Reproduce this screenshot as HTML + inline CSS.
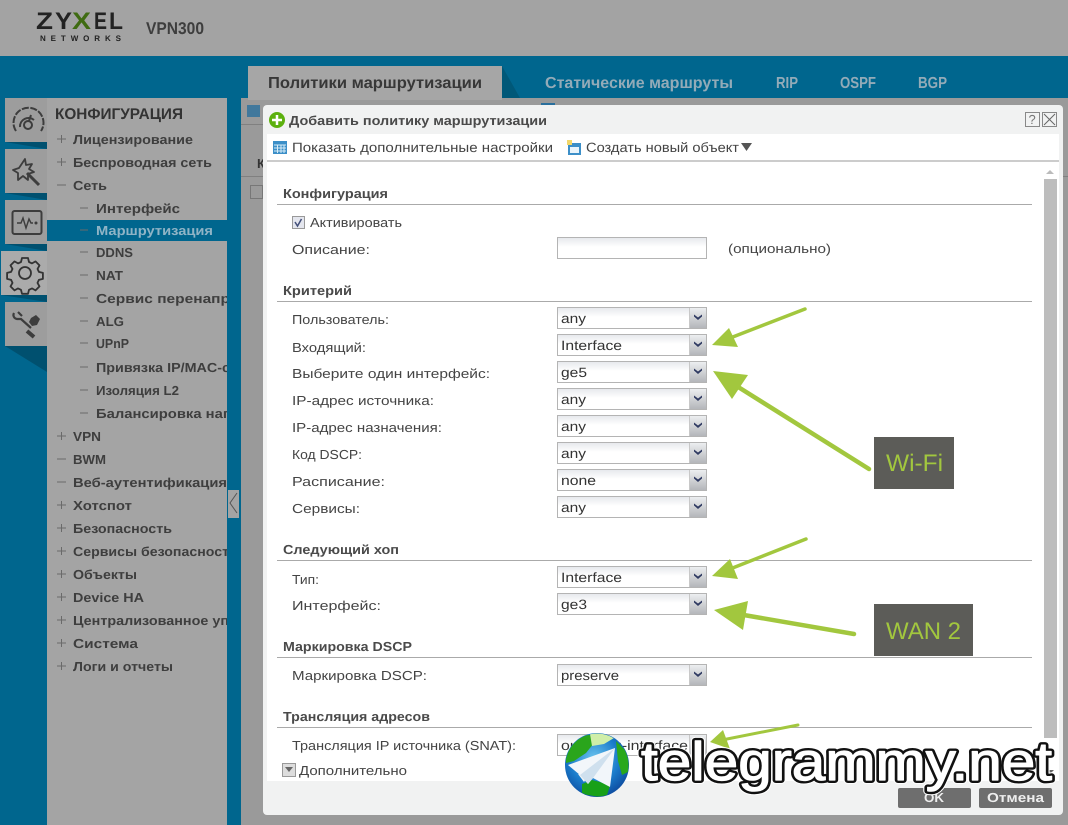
<!DOCTYPE html>
<html><head><meta charset="utf-8"><title>VPN300</title>
<style>
html,body{margin:0;padding:0;background:#00668e;width:1068px;height:825px;overflow:hidden}
svg{display:block}
text{font-family:"Liberation Sans","DejaVu Sans",sans-serif;text-rendering:geometricPrecision}
.m{font-size:13px;font-weight:700;fill:#3e3e3e}
.sel{font-size:13px;font-weight:700}
.l{font-size:13px;fill:#444}
.t{font-size:13px;font-weight:700;fill:#4a4a4a}
.s{font-size:13.5px;fill:#444}
.tab{font-size:16px;font-weight:700;fill:#93abb8}
</style></head><body>
<svg width="1068" height="825" viewBox="0 0 1068 825" xmlns="http://www.w3.org/2000/svg">
<defs>
<linearGradient id="sg" x1="0" y1="0" x2="0" y2="1"><stop offset="0" stop-color="#e6e8ec"/><stop offset=".45" stop-color="#fff"/><stop offset="1" stop-color="#fff"/></linearGradient>
<linearGradient id="bg" x1="0" y1="0" x2="0" y2="1"><stop offset="0" stop-color="#eceef0"/><stop offset="1" stop-color="#b4b6ba"/></linearGradient>
<radialGradient id="gl" cx=".45" cy=".4" r=".7"><stop offset="0" stop-color="#6cc4ee"/><stop offset=".55" stop-color="#1a7ccb"/><stop offset="1" stop-color="#0a3d92"/></radialGradient>
<clipPath id="sb"><rect x="47" y="98" width="180" height="727"/></clipPath>
<clipPath id="gc"><circle cx="597" cy="765" r="31.5"/></clipPath>
<g id="select">
<rect x=".5" y=".5" width="149" height="21" fill="url(#sg)" stroke="#b4b4b4"/>
<rect x="133" y="1" width="16" height="20" fill="url(#bg)"/>
<path d="M132.500 1v20" stroke="#c8c8c8"/>
<path d="M137 7.500l4 3 4-3v2l-4 3.500-4-3.500z" fill="#2f3a62"/>
</g>
</defs>

<rect width="1068" height="825" fill="#00668e"/>
<rect width="1068" height="56" fill="#a3a3a3"/>

<g font-size="24" font-weight="700" fill="#222">
<text x="36" y="29" textLength="17" lengthAdjust="spacingAndGlyphs">Z</text>
<text x="55" y="29" textLength="17" lengthAdjust="spacingAndGlyphs">Y</text>
<text x="72" y="29" textLength="19" lengthAdjust="spacingAndGlyphs" fill="#3f6b12">X</text>
<text x="94" y="29" textLength="13" lengthAdjust="spacingAndGlyphs">E</text>
<text x="109" y="29" textLength="14" lengthAdjust="spacingAndGlyphs">L</text>
</g>
<text x="40" y="41" font-size="8" font-weight="700" fill="#222" textLength="81">NETWORKS</text>
<text x="146" y="34" font-size="17" font-weight="700" fill="#3e3e3e" textLength="58" lengthAdjust="spacingAndGlyphs">VPN300</text>

<!-- tabs -->
<rect x="241" y="98" width="827" height="727" fill="#9a9a9a"/>
<rect x="248" y="66" width="254" height="34" fill="#a6a6a6"/>
<path d="M502 66l18 32h-18z" fill="#005878"/>
<text x="268" y="88" font-size="16" font-weight="700" fill="#383838" textLength="214" lengthAdjust="spacingAndGlyphs">Политики маршрутизации</text>
<text class="tab" x="545" y="88" textLength="188" lengthAdjust="spacingAndGlyphs">Статические маршруты</text>
<text class="tab" x="776" y="88" textLength="22" lengthAdjust="spacingAndGlyphs">RIP</text>
<text class="tab" x="840" y="88" textLength="36" lengthAdjust="spacingAndGlyphs">OSPF</text>
<text class="tab" x="918" y="88" textLength="29" lengthAdjust="spacingAndGlyphs">BGP</text>

<!-- side tiles -->
<path d="M5 346L47 372V346z" fill="#00506f"/>
<path d="M5 142L47 149V142zM5 193L47 200V193zM5 244L47 251V244zM1 295L47 302V295z" fill="#00506f"/>
<rect x="5" y="98" width="42" height="44" fill="#9d9d9d"/>
<rect x="5" y="149" width="42" height="44" fill="#9d9d9d"/>
<rect x="5" y="200" width="42" height="44" fill="#9d9d9d"/>
<rect x="1" y="251" width="46" height="44" fill="#ababab"/>
<rect x="5" y="302" width="42" height="44" fill="#9d9d9d"/>
<!-- gauge -->
<g fill="none" stroke="#3d3d3d" stroke-width="2">
<path d="M16 131a15 15 0 1 1 25 0" stroke-dasharray="7 1.500"/>
<circle cx="28" cy="125" r="4"/><path d="M20 127a8.500 8.500 0 0 1 14-7M29 121l2-6"/>
</g>
<!-- wand -->
<g fill="none" stroke="#3d3d3d" stroke-width="1.800">
<path d="M25 159l1 6 6-1-3 5 5 3-6 2 0 6-5-4-5 4 0-7-5-3 6-2z" stroke-linejoin="round"/>
<path d="M27 173l12 12" stroke-width="3"/>
</g>
<!-- monitor -->
<rect x="12.500" y="211" width="29" height="23" rx="2" fill="none" stroke="#3d3d3d" stroke-width="2"/>
<path d="M17 223h4l2-5 3 10 3-9 2 4h2" fill="none" stroke="#3d3d3d" stroke-width="1.400"/><circle cx="36" cy="223" r="1.500" fill="#3d3d3d"/>
<!-- gear -->
<g fill="none" stroke="#333" stroke-width="1.800" stroke-linejoin="round">
<path d="M22 258h6l1 4 3 1.400 3.500-2 4 4-2 3.500 1.400 3 4 1v6l-4 1-1.400 3 2 3.500-4 4-3.500-2-3 1.400-1 4h-6l-1-4-3-1.400-3.500 2-4-4 2-3.500-1.400-3-4-1v-6l4-1 1.400-3-2-3.500 4-4 3.500 2 3-1.400z"/>
<circle cx="25" cy="273" r="6"/>
</g>
<!-- tools -->
<g fill="none" stroke="#3d3d3d" stroke-width="2.200">
<path d="M14 313a4 4 0 0 0 3 6l4 0 10 9"/><path d="M18 312l4 4"/><path d="M27 331l7 6" stroke-width="4"/>
</g>
<path d="M31 318l5-3 4 4-3 6-5 1-3-4z" fill="#3d3d3d"/>

<!-- sidebar -->
<rect x="47" y="98" width="180" height="727" fill="#a4a4a4"/>
<rect x="47" y="220" width="180" height="21" fill="#00668e"/>
<rect x="228" y="490" width="11" height="28" fill="#a4a4a4"/>
<path d="M237 493l-7 10 7 10" fill="none" stroke="#555" stroke-width="1"/>
<g clip-path="url(#sb)">
<text x="55" y="119" font-size="15.500" font-weight="700" fill="#333" textLength="128" lengthAdjust="spacingAndGlyphs">КОНФИГУРАЦИЯ</text>
<g class="m">
<text x="73" y="144" textLength="120" lengthAdjust="spacingAndGlyphs">Лицензирование</text>
<text x="73" y="167" textLength="139" lengthAdjust="spacingAndGlyphs">Беспроводная сеть</text>
<text x="73" y="190" textLength="34" lengthAdjust="spacingAndGlyphs">Сеть</text>
<text x="96" y="213" textLength="84" lengthAdjust="spacingAndGlyphs">Интерфейс</text>
<text class="sel" x="96" y="235" textLength="117" lengthAdjust="spacingAndGlyphs" style="fill:#8fb4c6">Маршрутизация</text>
<text x="96" y="257" textLength="37" lengthAdjust="spacingAndGlyphs">DDNS</text>
<text x="96" y="280" textLength="27" lengthAdjust="spacingAndGlyphs">NAT</text>
<text x="96" y="303" textLength="134" lengthAdjust="spacingAndGlyphs">Сервис перенапр</text>
<text x="96" y="326" textLength="28" lengthAdjust="spacingAndGlyphs">ALG</text>
<text x="96" y="348" textLength="33" lengthAdjust="spacingAndGlyphs">UPnP</text>
<text x="96" y="372" textLength="134" lengthAdjust="spacingAndGlyphs">Привязка IP/MAC-с</text>
<text x="96" y="395" textLength="83" lengthAdjust="spacingAndGlyphs">Изоляция L2</text>
<text x="96" y="418" textLength="133" lengthAdjust="spacingAndGlyphs">Балансировка наг</text>
<text x="73" y="441" textLength="28" lengthAdjust="spacingAndGlyphs">VPN</text>
<text x="73" y="464" textLength="33" lengthAdjust="spacingAndGlyphs">BWM</text>
<text x="73" y="487" textLength="154" lengthAdjust="spacingAndGlyphs">Веб-аутентификация</text>
<text x="73" y="510" textLength="59" lengthAdjust="spacingAndGlyphs">Хотспот</text>
<text x="73" y="533" textLength="99" lengthAdjust="spacingAndGlyphs">Безопасность</text>
<text x="73" y="556" textLength="156" lengthAdjust="spacingAndGlyphs">Сервисы безопасност</text>
<text x="73" y="579" textLength="64" lengthAdjust="spacingAndGlyphs">Объекты</text>
<text x="73" y="602" textLength="71" lengthAdjust="spacingAndGlyphs">Device HA</text>
<text x="73" y="625" textLength="156" lengthAdjust="spacingAndGlyphs">Централизованное уп</text>
<text x="73" y="648" textLength="65" lengthAdjust="spacingAndGlyphs">Система</text>
<text x="73" y="671" textLength="100" lengthAdjust="spacingAndGlyphs">Логи и отчеты</text>
</g>
<path d="M57 139h9M61.500 135v8M57 162h9M61.500 158v8M57 185h9M57 436h9M61.500 432v8M57 459h9M57 482h9M57 505h9M61.500 501v8M57 528h9M61.500 524v8M57 551h9M61.500 547v8M57 574h9M61.500 570v8M57 597h9M61.500 593v8M57 620h9M61.500 616v8M57 643h9M61.500 639v8M57 666h9M61.500 662v8M80 208h8M80 230h8M80 252h8M80 275h8M80 298h8M80 321h8M80 343h8M80 367h8M80 390h8M80 413h8" stroke="#6a6a6a" stroke-width="1" fill="none"/>
</g>

<!-- behind dialog -->
<path d="M241 124.500h22M241 176.500h22M1063 176.500h5" stroke="#808080"/>
<rect x="247" y="105" width="13" height="12" fill="#2a6f9c" opacity=".8"/>
<rect x="541" y="103" width="14" height="2" fill="#2a6f9c"/>
<text x="257" y="168" font-size="13" font-weight="700" fill="#333">К</text>
<rect x="250.500" y="185.500" width="12" height="13" fill="none" stroke="#777"/>

<!-- dialog -->
<rect x="263" y="105" width="800" height="710" rx="4" fill="#f1f2f2"/>
<rect x="267" y="134" width="792" height="647" fill="#fff"/>
<rect x="267" y="160" width="792" height="2" fill="#ccc"/>
<circle cx="277" cy="120" r="8" fill="#5cb00e"/>
<path d="M277 115v10M272 120h10" stroke="#fff" stroke-width="2.500"/>
<text class="t" x="289" y="125" textLength="258" lengthAdjust="spacingAndGlyphs">Добавить политику маршрутизации</text>
<rect x="1025.500" y="112.500" width="14" height="14" fill="none" stroke="#888"/>
<text x="1028.500" y="124" font-size="13" fill="#777">?</text>
<rect x="1042.500" y="112.500" width="14" height="14" fill="none" stroke="#888"/>
<path d="M1044 114l11 11M1055 114l-11 11" stroke="#666"/>

<!-- toolbar -->
<g>
<rect x="273" y="141" width="14" height="13" fill="#3c8fc8"/>
<path d="M274 145h12M274 148h12M274 151h12M277.500 145v8M281 145v8M284 145v8" stroke="#d6ecf8"/>
</g>
<text class="s" x="292" y="152" textLength="261" lengthAdjust="spacingAndGlyphs">Показать дополнительные настройки</text>
<rect x="568" y="143" width="13" height="12" fill="#3c8fc8"/><rect x="570" y="147" width="9" height="6" fill="#e9f4fb"/>
<path d="M567 140h5v5h-5z" fill="#f2d76a"/>
<text class="s" x="586" y="152" textLength="153" lengthAdjust="spacingAndGlyphs">Создать новый объект</text>
<path d="M741 143h11l-5.500 8z" fill="#555"/>

<!-- scrollbar -->
<rect x="1044" y="179" width="13" height="559" fill="#bdbdbd"/>
<path d="M1046 174l4-4 4 4z" fill="#bbb"/>
<path d="M1046 770h8l-4 4z" fill="#666"/>

<!-- section titles -->
<path d="M277 204.500h755M277 301.500h755M277 560.500h755M277 657.500h755M277 727.500h755" stroke="#aaa"/>
<g class="t">
<text x="283" y="198" textLength="105" lengthAdjust="spacingAndGlyphs">Конфигурация</text>
<text x="283" y="295" textLength="69" lengthAdjust="spacingAndGlyphs">Критерий</text>
<text x="283" y="554" textLength="116" lengthAdjust="spacingAndGlyphs">Следующий хоп</text>
<text x="283" y="651" textLength="129" lengthAdjust="spacingAndGlyphs">Маркировка DSCP</text>
<text x="283" y="721" textLength="147" lengthAdjust="spacingAndGlyphs">Трансляция адресов</text>
</g>

<!-- labels -->
<rect x="292.500" y="216.500" width="12" height="12" fill="#e4e6ee" stroke="#999"/>
<path d="M295 222l2.500 4 4-7" fill="none" stroke="#44507a" stroke-width="1.500"/>
<g class="l">
<text x="310" y="227" textLength="92" lengthAdjust="spacingAndGlyphs">Активировать</text>
<text x="292" y="254" textLength="78" lengthAdjust="spacingAndGlyphs">Описание:</text>
<text x="728" y="253" textLength="103" lengthAdjust="spacingAndGlyphs">(опционально)</text>
<text x="292" y="324" textLength="97" lengthAdjust="spacingAndGlyphs">Пользователь:</text>
<text x="292" y="352" textLength="74" lengthAdjust="spacingAndGlyphs">Входящий:</text>
<text x="292" y="378" textLength="198" lengthAdjust="spacingAndGlyphs">Выберите один интерфейс:</text>
<text x="292" y="405" textLength="142" lengthAdjust="spacingAndGlyphs">IP-адрес источника:</text>
<text x="292" y="432" textLength="150" lengthAdjust="spacingAndGlyphs">IP-адрес назначения:</text>
<text x="292" y="459" textLength="70" lengthAdjust="spacingAndGlyphs">Код DSCP:</text>
<text x="292" y="486" textLength="93" lengthAdjust="spacingAndGlyphs">Расписание:</text>
<text x="292" y="513" textLength="68" lengthAdjust="spacingAndGlyphs">Сервисы:</text>
<text x="292" y="584" textLength="27" lengthAdjust="spacingAndGlyphs">Тип:</text>
<text x="292" y="610" textLength="89" lengthAdjust="spacingAndGlyphs">Интерфейс:</text>
<text x="292" y="680" textLength="135" lengthAdjust="spacingAndGlyphs">Маркировка DSCP:</text>
<text x="292" y="750" textLength="224" lengthAdjust="spacingAndGlyphs">Трансляция IP источника (SNAT):</text>
<text x="299" y="775" textLength="108" lengthAdjust="spacingAndGlyphs">Дополнительно</text>
</g>
<rect x="282.500" y="763.500" width="13" height="13" fill="#ddd" stroke="#999"/>
<path d="M285 767h8l-4 5z" fill="#666"/>

<!-- inputs -->
<rect x="557.500" y="237.500" width="149" height="21" fill="url(#sg)" stroke="#b4b4b4"/>
<use href="#select" x="557" y="307"/>
<use href="#select" x="557" y="334"/>
<use href="#select" x="557" y="361"/>
<use href="#select" x="557" y="388"/>
<use href="#select" x="557" y="415"/>
<use href="#select" x="557" y="442"/>
<use href="#select" x="557" y="469"/>
<use href="#select" x="557" y="496"/>
<use href="#select" x="557" y="566"/>
<use href="#select" x="557" y="593"/>
<use href="#select" x="557" y="664"/>
<use href="#select" x="557" y="734"/>
<g font-size="13.500" fill="#333">
<text x="561" y="323" textLength="25" lengthAdjust="spacingAndGlyphs">any</text>
<text x="561" y="350" textLength="61" lengthAdjust="spacingAndGlyphs">Interface</text>
<text x="561" y="377" textLength="26" lengthAdjust="spacingAndGlyphs">ge5</text>
<text x="561" y="404" textLength="25" lengthAdjust="spacingAndGlyphs">any</text>
<text x="561" y="431" textLength="25" lengthAdjust="spacingAndGlyphs">any</text>
<text x="561" y="458" textLength="25" lengthAdjust="spacingAndGlyphs">any</text>
<text x="561" y="485" textLength="35" lengthAdjust="spacingAndGlyphs">none</text>
<text x="561" y="512" textLength="25" lengthAdjust="spacingAndGlyphs">any</text>
<text x="561" y="582" textLength="61" lengthAdjust="spacingAndGlyphs">Interface</text>
<text x="561" y="609" textLength="26" lengthAdjust="spacingAndGlyphs">ge3</text>
<text x="561" y="680" textLength="58" lengthAdjust="spacingAndGlyphs">preserve</text>
<text x="561" y="750" textLength="127" lengthAdjust="spacingAndGlyphs">outgoing-interface</text>
</g>

<!-- arrows -->
<g fill="#a2c73e" stroke="#a2c73e" stroke-linecap="round">
<path d="M805 309L725 340" stroke-width="3.500" fill="none"/><path d="M712 345L729 328 738 347z" stroke="none"/>
<path d="M869 469L735 385" stroke-width="4.500" fill="none"/><path d="M713 371L748 375 732 399z" stroke="none"/>
<path d="M806 539L725 571" stroke-width="3.500" fill="none"/><path d="M712 576L730 559 738 579z" stroke="none"/>
<path d="M854 634L738 614" stroke-width="4.500" fill="none"/><path d="M714 610L748 601 743 630z" stroke="none"/>
<path d="M798 725L722 740" stroke-width="3" fill="none"/><path d="M710 742L723 730 730 749z" stroke="none"/>
</g>
<rect x="874" y="437" width="80" height="52" fill="#5c5c58"/>
<text x="886" y="471" font-size="24" fill="#a2c73e" textLength="57" lengthAdjust="spacingAndGlyphs">Wi-Fi</text>
<rect x="874" y="604" width="99" height="52" fill="#5c5c58"/>
<text x="886" y="639" font-size="24" fill="#a2c73e" textLength="75" lengthAdjust="spacingAndGlyphs">WAN 2</text>

<!-- buttons -->
<rect x="898" y="788" width="73" height="20" rx="2" fill="#6e6e6e"/>
<rect x="979" y="788" width="73" height="20" rx="2" fill="#6e6e6e"/>
<text x="924" y="802" font-size="13" font-weight="700" fill="#eee" textLength="20" lengthAdjust="spacingAndGlyphs">OK</text>
<text x="987" y="802" font-size="13" font-weight="700" fill="#eee" textLength="57" lengthAdjust="spacingAndGlyphs">Отмена</text>

<!-- watermark -->
<circle cx="597" cy="765" r="32" fill="url(#gl)"/>
<g clip-path="url(#gc)">
<path d="M566 755c2-10 12-20 24-20l4 8-8 10-12 8-8 2z" fill="#2aa51c"/>
<path d="M616 741l14 14 0 16-8 4-4-14z" fill="#29a81c"/>
<path d="M582 784l10-4 8 2 10 4-4 12-24-4z" fill="#18a018"/>
<path d="M590 734l14-2 10 6-10 6-12 2z" fill="#cfeea8"/>
<path d="M578 774l6 8 4-6z" fill="#f4f4f4"/>
</g>
<path d="M568 765L615 748 610 787 593 778 588 784 580 775z" fill="#f2f6fa"/>
<path d="M580 775L615 748 593 778 588 784z" fill="#cfe0ee"/>
<g font-size="54" font-weight="400">
<text x="641" y="780" textLength="411" lengthAdjust="spacingAndGlyphs" fill="none" stroke="#fff" stroke-width="8" stroke-linejoin="round">telegrammy.net</text>
<text x="641" y="780" textLength="411" lengthAdjust="spacingAndGlyphs" fill="none" stroke="#111" stroke-width="6" stroke-linejoin="round">telegrammy.net</text>
<text x="641" y="780" textLength="411" lengthAdjust="spacingAndGlyphs" fill="#fff" stroke="#fff" stroke-width="1.200" stroke-linejoin="round">telegrammy.net</text>
</g>
</svg>
</body></html>
